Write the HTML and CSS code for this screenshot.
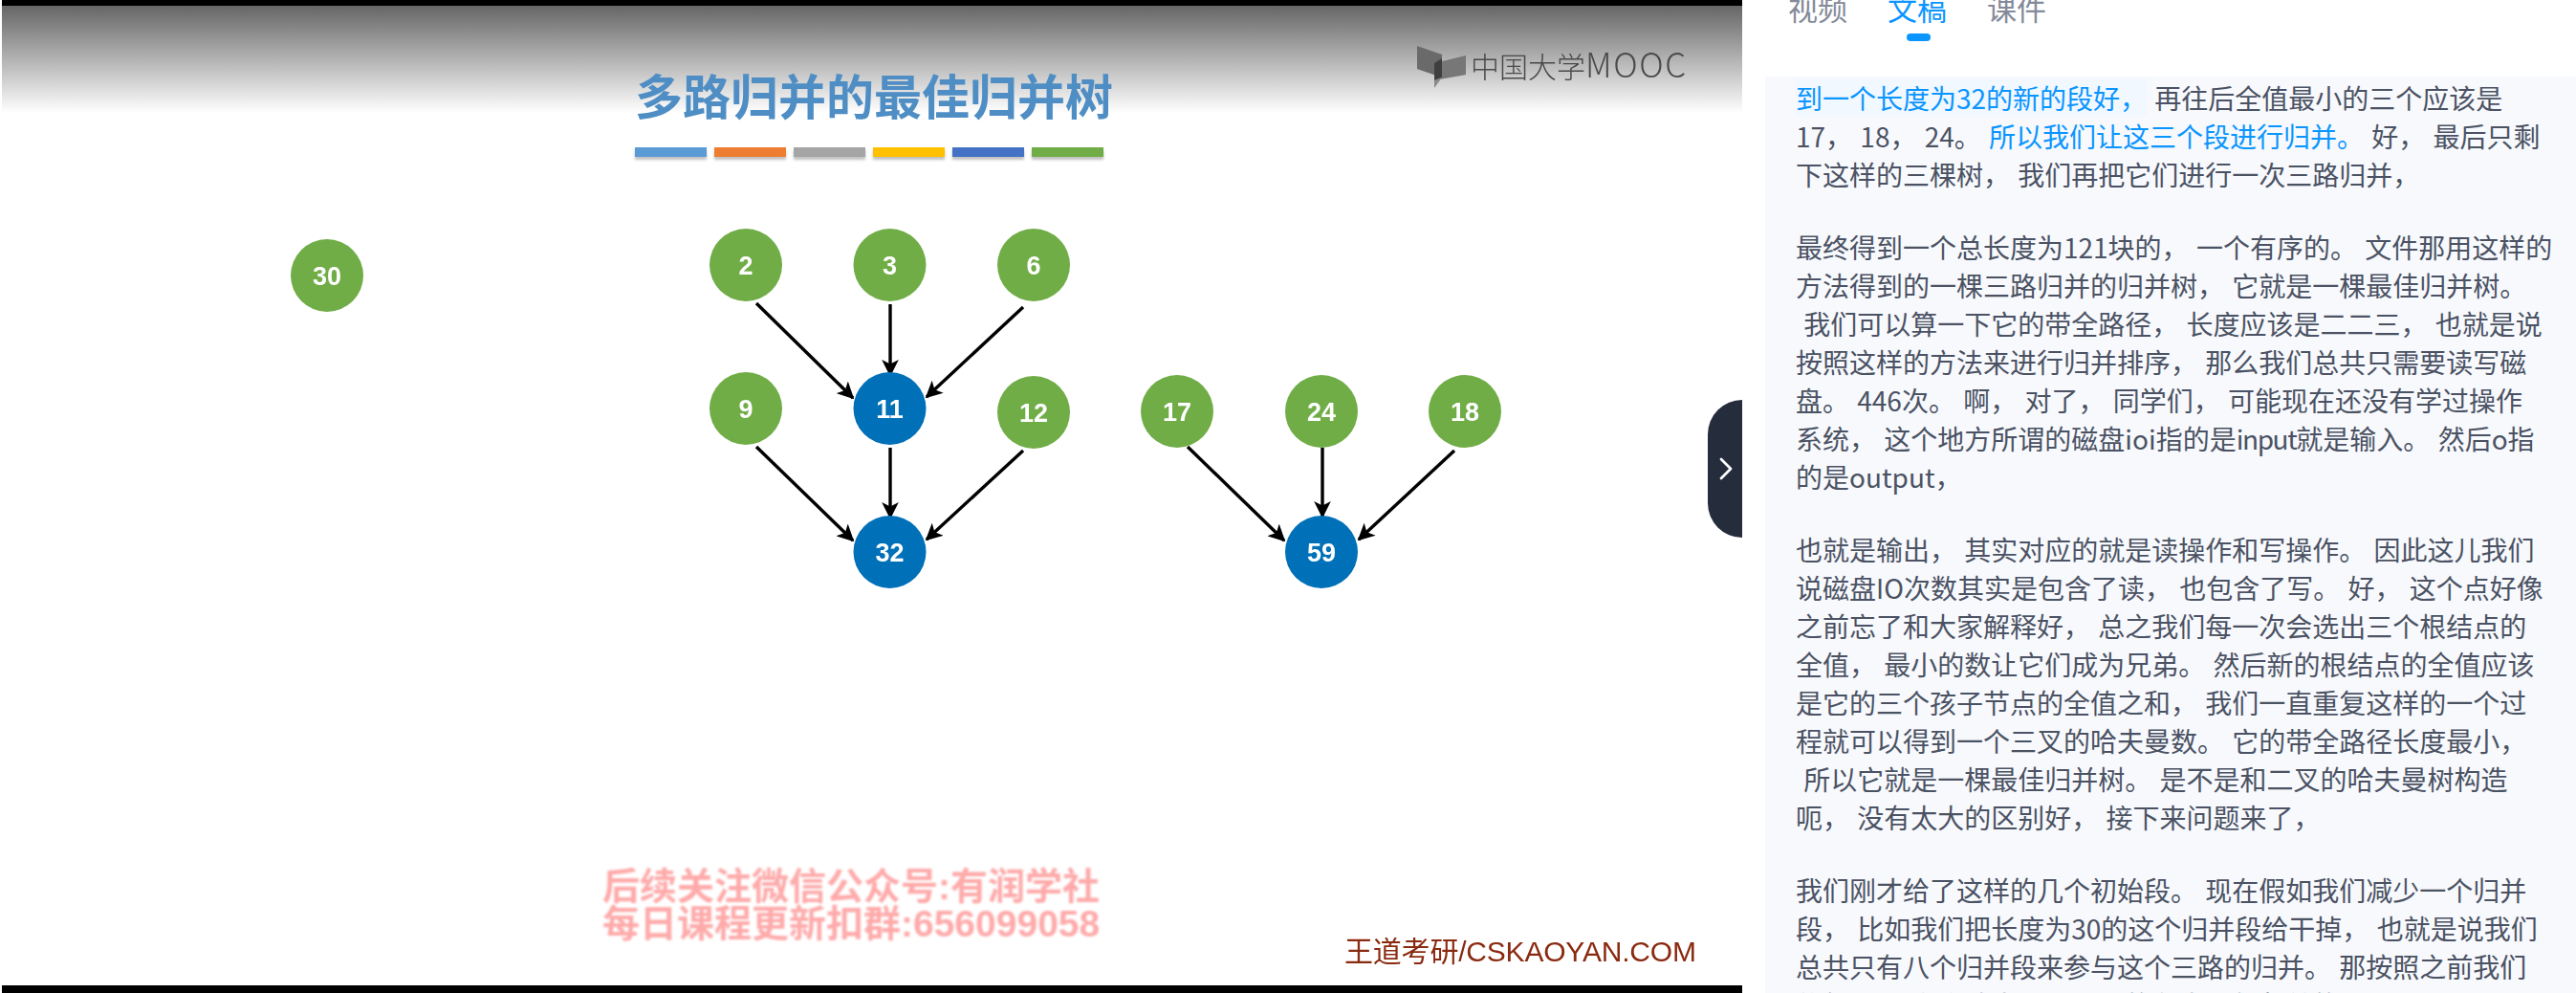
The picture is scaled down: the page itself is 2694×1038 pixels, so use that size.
FILE: index.html
```html
<!DOCTYPE html>
<html lang="zh-CN">
<head>
    <meta charset="UTF-8">
    <title>多路归并的最佳归并树</title>
    <link rel="stylesheet" href="styles.css">
</head>
<body>
    <div class="page">
        <div class="player">
            <div class="screen">
                <div class="slide">
                    <div class="shade"></div>
                    <h1 class="slideTitle">多路归并的最佳归并树</h1>
                    <div class="colorBars">
                        <span class="bar barBlue"></span>
                        <span class="bar barOrange"></span>
                        <span class="bar barGray"></span>
                        <span class="bar barYellow"></span>
                        <span class="bar barIndigo"></span>
                        <span class="bar barGreen"></span>
                    </div>
                    <div class="mooc">
                        <svg class="moocIcon" viewBox="0 0 51 44" width="51" height="44">
                            <polygon points="0,0 26,9 26,33 0,24" fill="#6a6a6a"/>
                            <polygon points="51,10 51,30 18,36 18,18" fill="#777"/>
                            <polygon points="18,18 26,13 26,33 18,36" fill="#3f3f3f"/>
                            <polygon points="18,36 26,33 18,44" fill="#8a8a8a"/>
                        </svg>
                        <span class="moocText">中国大学<span class="moocLatin">MOOC</span></span>
                    </div>

                    <svg class="tree" viewBox="0 0 1820 1038" width="1820" height="1038">
                        <defs>
                            <marker id="arrow" viewBox="0 0 10 10" refX="9" refY="5" markerWidth="5.2" markerHeight="5.2" orient="auto">
                                <path d="M0,0 L10,5 L0,10 L2.5,5 Z" fill="#000"/>
                            </marker>
                        </defs>
                        <g class="edges">
                            <line x1="791" y1="317" x2="892" y2="416"/>
                            <line x1="931" y1="318" x2="931" y2="392"/>
                            <line x1="1070" y1="321" x2="969" y2="415"/>
                            <line x1="791" y1="467" x2="892" y2="565"/>
                            <line x1="931" y1="468" x2="931" y2="541"/>
                            <line x1="1070" y1="471" x2="969" y2="564"/>
                            <line x1="1242" y1="467" x2="1343" y2="565"/>
                            <line x1="1383" y1="468" x2="1383" y2="540"/>
                            <line x1="1521" y1="471" x2="1421" y2="564"/>
                        </g>
                        <g class="leaf">
                            <circle cx="342" cy="288" r="38"/>
                            <circle cx="780" cy="277" r="38"/>
                            <circle cx="930.5" cy="277" r="38"/>
                            <circle cx="1081" cy="277" r="38"/>
                            <circle cx="780" cy="427" r="38"/>
                            <circle cx="1081" cy="431" r="38"/>
                            <circle cx="1231" cy="430" r="38"/>
                            <circle cx="1382" cy="430" r="38"/>
                            <circle cx="1532" cy="430" r="38"/>
                        </g>
                        <g class="root">
                            <circle cx="930.5" cy="427" r="38"/>
                            <circle cx="930.5" cy="577" r="38"/>
                            <circle cx="1382" cy="577" r="38"/>
                        </g>
                        <g class="nodeText">
                            <text x="342" y="298">30</text>
                            <text x="780" y="287">2</text>
                            <text x="930.5" y="287">3</text>
                            <text x="1081" y="287">6</text>
                            <text x="780" y="437">9</text>
                            <text x="930.5" y="437">11</text>
                            <text x="1081" y="441">12</text>
                            <text x="930.5" y="587">32</text>
                            <text x="1231" y="440">17</text>
                            <text x="1382" y="440">24</text>
                            <text x="1532" y="440">18</text>
                            <text x="1382" y="587">59</text>
                        </g>
                    </svg>

                    <div class="promo">
                        <div class="promoLine">后续关注微信公众号:有润学社</div>
                        <div class="promoLine">每日课程更新扣群:656099058</div>
                    </div>
                    <div class="credit">王道考研/CSKAOYAN.COM</div>
                    <div class="collapse">
                        <svg viewBox="0 0 14 24" width="14" height="24">
                            <path d="M2,2 L12,12 L2,22" fill="none" stroke="#fff" stroke-width="2.8" stroke-linecap="round" stroke-linejoin="round"/>
                        </svg>
                    </div>
                </div>
            </div>
        </div>

        <div class="side">
            <div class="tabs">
                <div class="tab">视频</div>
                <div class="tab tabActive">文稿</div>
                <div class="tab">课件</div>
            </div>
            <div class="transcript">
                <p><span class="current">到一个长度为32的新的段好，</span> 再往后全值最小的三个应该是
17， 18， 24。 <span class="spoken">所以我们让这三个段进行归并。</span> 好， 最后只剩
下这样的三棵树， 我们再把它们进行一次三路归并，</p>
                <p>最终得到一个总长度为121块的， 一个有序的。 文件那用这样的
方法得到的一棵三路归并的归并树， 它就是一棵最佳归并树。
 我们可以算一下它的带全路径， 长度应该是二二三， 也就是说
按照这样的方法来进行归并排序， 那么我们总共只需要读写磁
盘。 446次。 啊， 对了， 同学们， 可能现在还没有学过操作
系统， 这个地方所谓的磁盘ioi指的是<span class="tight">input</span>就是输入。 然后o指
的是output，</p>
                <p>也就是输出， 其实对应的就是读操作和写操作。 因此这儿我们
说磁盘IO次数其实是包含了读， 也包含了写。 好， 这个点好像
之前忘了和大家解释好， 总之我们每一次会选出三个根结点的
全值， 最小的数让它们成为兄弟。 然后新的根结点的全值应该
是它的三个孩子节点的全值之和， 我们一直重复这样的一个过
程就可以得到一个三叉的哈夫曼数。 它的带全路径长度最小，
 所以它就是一棵最佳归并树。 是不是和二叉的哈夫曼树构造
呃， 没有太大的区别好， 接下来问题来了，</p>
                <p>我们刚才给了这样的几个初始段。 现在假如我们减少一个归并
段， 比如我们把长度为30的这个归并段给干掉， 也就是说我们
总共只有八个归并段来参与这个三路的归并。 那按照之前我们
依然， 一次会选出三个最小的段来进行归并的话，</p>
            </div>
        </div>
    </div>
</body>
</html>
```

FILE: styles.css
```css
html, body {
    margin: 0;
    padding: 0;
    height: 100%;
    background-color: #fff;
    overflow: hidden;
}

.page {
    display: flex;
    height: 1038px;
    font-family: "Noto Sans CJK SC", sans-serif;
}

/* video column */
.player {
    width: 1822px;
    height: 1038px;
    padding-left: 2px;
    box-sizing: border-box;
    flex-shrink: 0;
}

.screen {
    height: 100%;
    background-color: #000;
    padding: 6px 0 8px;
    box-sizing: border-box;
}

.slide {
    position: relative;
    height: 1024px;
    background-color: #fff;
}

.shade {
    height: 112px;
    background: linear-gradient(#666, #fff);
}

.slideTitle {
    position: absolute;
    left: 662px;
    top: 62px;
    margin: 0;
    font-size: 50px;
    line-height: 60px;
    font-weight: 700;
    color: #4f8ec4;
    white-space: nowrap;
    filter: blur(0.7px);
}

.colorBars {
    position: absolute;
    left: 662px;
    top: 148px;
    display: flex;
    gap: 8px;
    filter: blur(0.5px);
}

.bar {
    display: block;
    width: 75px;
    height: 10px;
    box-shadow: 0 3px 3px rgba(0, 0, 0, 0.25);
}

.barBlue { background-color: #5b9bd5; }
.barOrange { background-color: #ed7d31; }
.barGray { background-color: #a5a5a5; }
.barYellow { background-color: #ffc000; }
.barIndigo { background-color: #4472c4; }
.barGreen { background-color: #70ad47; }

.mooc {
    position: absolute;
    left: 1480px;
    top: 42px;
    display: flex;
    align-items: flex-start;
    gap: 5px;
    filter: blur(0.7px);
}

.moocText {
    font-size: 30px;
    line-height: 40px;
    font-weight: 300;
    color: #4a4a4a;
    white-space: nowrap;
}

.moocLatin {
    font-size: 35px;
    letter-spacing: 1.6px;
    line-height: 34px;
}

.tree {
    position: absolute;
    left: 0;
    top: -6px;
    margin-left: -2px;
    filter: blur(0.4px);
}

.edges line {
    stroke: #000;
    stroke-width: 3.4;
    marker-end: url(#arrow);
}

.leaf circle {
    fill: #70ad47;
}

.root circle {
    fill: #0070b8;
}

.nodeText text {
    fill: #fff;
    font-family: "Liberation Sans", sans-serif;
    font-size: 27px;
    font-weight: 700;
    text-anchor: middle;
}

.promo {
    position: absolute;
    left: 628px;
    top: 901px;
    width: 523px;
    color: #ffaaaa;
    font-family: "Liberation Sans", "Noto Sans CJK SC", sans-serif;
    font-size: 39px;
    font-weight: 700;
    line-height: 39px;
    filter: blur(0.8px);
}

.promoLine {
    white-space: nowrap;
}

.credit {
    position: absolute;
    left: 1404px;
    top: 972px;
    font-family: "Liberation Sans", "Noto Sans CJK SC", sans-serif;
    font-size: 30px;
    letter-spacing: -0.2px;
    line-height: 34px;
    color: #8a2a10;
    white-space: nowrap;
    filter: blur(0.5px);
}

.collapse {
    position: absolute;
    right: 0;
    top: 412px;
    width: 36px;
    height: 144px;
    background-color: #252c3b;
    border-radius: 36px 0 0 36px;
    display: flex;
    align-items: center;
    justify-content: flex-start;
    padding-left: 12px;
    box-sizing: border-box;
}

/* right column */
.side {
    flex: 1;
    min-width: 0;
    display: flex;
    flex-direction: column;
    height: 1038px;
    overflow: hidden;
}

.tabs {
    display: flex;
    gap: 42px;
    height: 80px;
    padding-left: 48px;
    flex-shrink: 0;
    box-sizing: border-box;
}

.tab {
    position: relative;
    font-size: 31px;
    line-height: 31px;
    height: 31px;
    margin-top: -8px;
    color: #848a99;
    white-space: nowrap;
}

.tabActive {
    color: #0a95ff;
}

.tabActive::after {
    content: "";
    position: absolute;
    left: 20px;
    top: 43px;
    width: 25px;
    height: 8px;
    border-radius: 4px;
    background-color: #0a95ff;
}

.transcript {
    margin-left: 24px;
    padding: 2px 0 0 32px;
    background-color: #f7f9fd;
    flex: 1;
    overflow: hidden;
    font-size: 28px;
    line-height: 40px;
    word-spacing: 2px;
    color: #4b5263;
}

.transcript p {
    margin: 0 0 36px;
    white-space: pre;
}

.current {
    color: #0a95ff;
    background-color: #f1f8ff;
}

.spoken {
    color: #0a95ff;
}

.tight {
    letter-spacing: -1.4px;
}
```
